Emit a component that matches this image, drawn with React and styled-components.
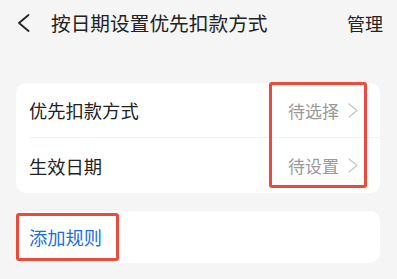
import React from 'react';
import styled, { createGlobalStyle } from 'styled-components';

const GlobalStyle = createGlobalStyle`
  html, body {
    margin: 0;
    padding: 0;
    background: #f5f5f5;
    font-family: "Noto Sans CJK SC", "Noto Sans", sans-serif;
  }
`;

const Page = styled.div`
  width: 397px;
  height: 279px;
  background: #f5f5f5;
  overflow: hidden;
`;

const Header = styled.div`
  display: flex;
  align-items: center;
  height: 46px;
  padding: 0 14px 0 17px;
`;

const BackButton = styled.div`
  display: flex;
  align-items: center;
  width: 34px;
  height: 46px;
`;

const Title = styled.div`
  flex: 1;
  font-size: 19.7px;
  color: #222;
  line-height: 1;
`;

const Action = styled.div`
  font-size: 18px;
  color: #222;
  line-height: 1;
`;

const Card = styled.div`
  position: relative;
  margin: ${p => p.$top}px 17px 0 16px;
  background: #fff;
  border-radius: 10px;
`;

const Row = styled.div`
  display: flex;
  align-items: center;
  height: ${p => p.$height}px;
  padding-right: 22px;
  border-top: ${p => (p.$divider ? '1px solid #f2f2f2' : 'none')};
  margin-left: ${p => (p.$divider ? '13px' : '0')};
  padding-left: ${p => (p.$divider ? '0' : '13px')};
`;

const Label = styled.div`
  flex: 1;
  font-size: 18.3px;
  color: ${p => p.$color || '#222'};
`;

const Value = styled.div`
  font-size: 17px;
  color: #999;
  margin-right: 9px;
`;

const Highlight = styled.div`
  position: absolute;
  left: ${p => p.$left}px;
  top: ${p => p.$top}px;
  width: ${p => p.$width}px;
  height: ${p => p.$height}px;
  border: 3px solid #ec4a3d;
  border-radius: 3px;
  box-sizing: border-box;
  pointer-events: none;
`;

const Chevron = () => (
  <svg width="10" height="15" viewBox="0 0 10 15" fill="none">
    <path d="M1 1 L9 7.5 L1 14" stroke="#c8c8c8" strokeWidth="1.4" strokeLinecap="round" strokeLinejoin="round" />
  </svg>
);

const BackIcon = () => (
  <svg width="13" height="18" viewBox="0 0 13 18" fill="none">
    <path d="M11.5 1 L2 9 L11.5 17" stroke="#222" strokeWidth="1.8" strokeLinecap="round" strokeLinejoin="round" />
  </svg>
);

export default function App() {
  return (
    <Page>
      <GlobalStyle />
      <Header>
        <BackButton>
          <BackIcon />
        </BackButton>
        <Title>按日期设置优先扣款方式</Title>
        <Action>管理</Action>
      </Header>

      <Card $top={37}>
        <Row $height={54}>
          <Label>优先扣款方式</Label>
          <Value>待选择</Value>
          <Chevron />
        </Row>
        <Row $height={55} $divider>
          <Label>生效日期</Label>
          <Value>待设置</Value>
          <Chevron />
        </Row>
        <Highlight $left={253} $top={-1} $width={98} $height={106} />
      </Card>

      <Card $top={18}>
        <Row $height={52}>
          <Label $color="#1a6fe0">添加规则</Label>
        </Row>
        <Highlight $left={0} $top={2} $width={103} $height={48} />
      </Card>
    </Page>
  );
}
